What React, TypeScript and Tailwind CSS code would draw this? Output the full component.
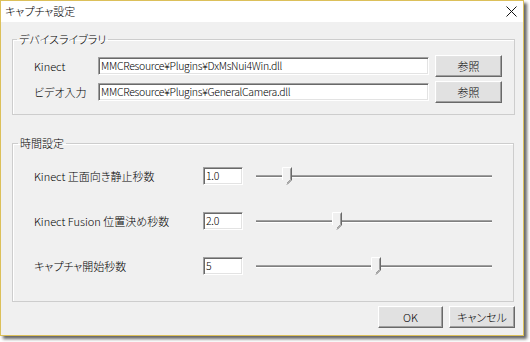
import React from "react"

function PushButton({ label, className = "" }: { label: string; className?: string }) {
  return (
    <button
      className={`h-[22px] bg-[#e1e1e1] text-[11px] text-black border border-t-white border-l-white border-r-[#696969] border-b-[#696969] shadow-[inset_-1px_-1px_0_#a0a0a0,inset_1px_1px_0_#e3e3e3] flex items-center justify-center ${className}`}
    >
      {label}
    </button>
  )
}

function TextBox({ value, className = "" }: { value: string; className?: string }) {
  return (
    <div
      className={`h-[18px] bg-white border border-t-[#a0a0a0] border-l-[#a0a0a0] border-r-white border-b-white shadow-[inset_1px_1px_0_#696969,inset_-1px_-1px_0_#e3e3e3] pl-[2px] text-[10.5px] leading-[16px] tracking-[-0.3px] text-black whitespace-nowrap overflow-hidden ${className}`}
    >
      {value}
    </div>
  )
}

function Thumb() {
  return (
    <svg width="11" height="19" viewBox="0 0 11 19">
      <polygon points="0.5,0.5 9.5,0.5 9.5,13 5,17.5 0.5,13" fill="#f0f0f0" />
      <polyline points="0.5,13 0.5,0.5 9.5,0.5" fill="none" stroke="#ffffff" />
      <polyline points="9.5,0.5 9.5,13 5,17.5" fill="none" stroke="#696969" />
      <polyline points="8.5,1.5 8.5,12.5 5,16" fill="none" stroke="#a0a0a0" />
    </svg>
  )
}

function Slider({ offset }: { offset: string }) {
  return (
    <div className="relative w-[236px] h-[20px]">
      <div className="absolute left-0 right-0 top-[9px] h-[3px] border-t border-t-[#a0a0a0] bg-[#808080] border-b border-b-white" />
      <div className={`absolute top-[1px] ${offset}`}>
        <Thumb />
      </div>
    </div>
  )
}

const timeRows = [
  { label: "Kinect 正面向き静止秒数", value: "1.0", offset: "left-[26px]" },
  { label: "Kinect Fusion 位置決め秒数", value: "2.0", offset: "left-[76px]" },
  { label: "キャプチャ開始秒数", value: "5", offset: "left-[115px]" },
]

export default function App() {
  return (
    <div className="w-[530px] h-[342px] bg-white font-['Noto_Sans_CJK_JP',_'Noto_Sans',_sans-serif] font-light [font-feature-settings:'palt']">
      <div className="w-[524px] h-[336px] border border-[#dcc05a] bg-[#f0f0f0] flex flex-col shadow-[3px_3px_3px_rgba(0,0,0,0.6)]">
        {/* Title bar */}
        <div className="h-[21px] bg-white flex items-center justify-between pl-[4px] pr-[6px]">
          <span className="text-[11px] text-black">キャプチャ設定</span>
          <svg width="11" height="11" viewBox="0 0 11 11">
            <path d="M0.5 0.5 L10.5 10.5 M10.5 0.5 L0.5 10.5" stroke="#111" strokeWidth="1" />
          </svg>
        </div>

        {/* Device library */}
        <fieldset className="mt-[9px] ml-[11px] w-[502px] h-[84px] border border-[#cdcdcd] shadow-[inset_1px_1px_0_#fff] pl-[21px] pr-[12px] text-[11px] text-black">
          <legend className="ml-[-17px] px-[2px] leading-[16px]">デバイスライブラリ</legend>
          <div className="flex items-center mt-[8px] h-[22px]">
            <span className="w-[64px]">Kinect</span>
            <TextBox value="MMCResource¥Plugins¥DxMsNui4Win.dll" className="w-[331px]" />
            <PushButton label="参照" className="ml-[6px] w-[67px]" />
          </div>
          <div className="flex items-center mt-[4px] h-[22px]">
            <span className="w-[64px]">ビデオ入力</span>
            <TextBox value="MMCResource¥Plugins¥GeneralCamera.dll" className="w-[331px]" />
            <PushButton label="参照" className="ml-[6px] w-[67px]" />
          </div>
        </fieldset>

        {/* Time settings */}
        <fieldset className="mt-[20px] ml-[11px] w-[502px] h-[167px] border border-[#cdcdcd] shadow-[inset_1px_1px_0_#fff] pl-[21px] text-[11px] text-black">
          <legend className="ml-[-16px] px-[2px] leading-[16px]">時間設定</legend>
          <div className="flex flex-col gap-[25px] mt-[15px]">
            {timeRows.map((row) => (
              <div key={row.label} className="flex items-center h-[20px]">
                <span className="w-[169px] whitespace-nowrap">{row.label}</span>
                <TextBox value={row.value} className="w-[40px]" />
                <div className="ml-[13px]">
                  <Slider offset={row.offset} />
                </div>
              </div>
            ))}
          </div>
        </fieldset>

        {/* Dialog buttons */}
        <div className="flex justify-end gap-[6px] mt-[4px] mr-[8px]">
          <PushButton label="OK" className="w-[65px]" />
          <PushButton label="キャンセル" className="w-[66px]" />
        </div>
      </div>
    </div>
  )
}
